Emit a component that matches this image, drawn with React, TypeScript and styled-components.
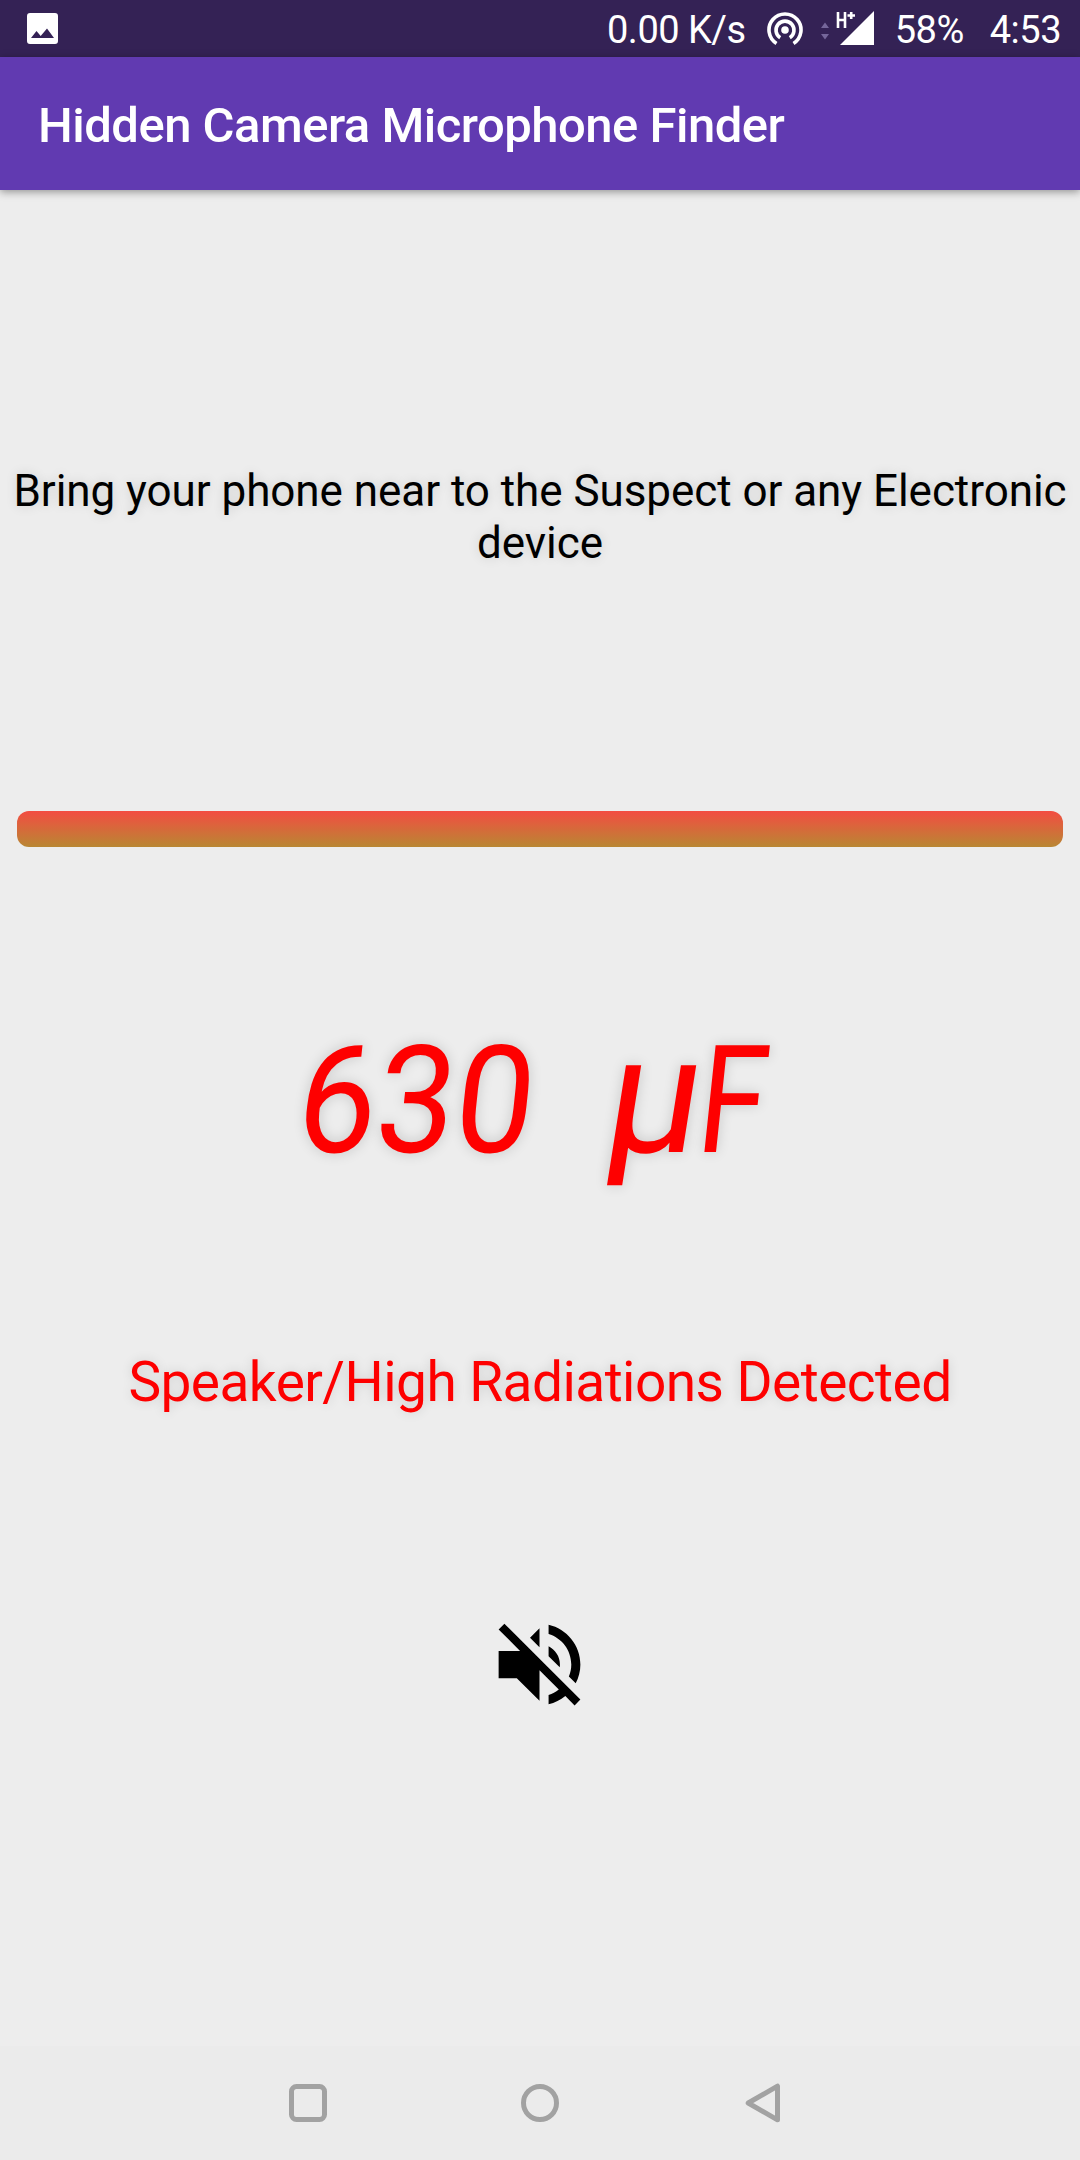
import React from 'react';
import styled, { createGlobalStyle } from 'styled-components';

const GlobalStyle = createGlobalStyle`
  * { box-sizing: border-box; }
  body { margin: 0; background: #ededed; font-family: Roboto, "Liberation Sans", sans-serif; }
`;

const Screen = styled.div`
  width: 1080px;
  height: 2160px;
  display: flex;
  flex-direction: column;
  overflow: hidden;
  background: #ededed;
`;

const StatusBar = styled.div`
  flex: none;
  height: 57px;
  padding: 0 19px 0 27px;
  display: flex;
  align-items: center;
  justify-content: space-between;
  background: #342255;
  color: #fff;
`;

const StatusGroup = styled.div`
  display: flex;
  align-items: center;
`;

const StatusText = styled.span<{ $left?: number }>`
  margin-left: ${(p) => p.$left ?? 0}px;
  font-size: 38px;
  line-height: 44px;
  letter-spacing: -0.5px;
  padding-top: 2px;
  white-space: nowrap;
`;

const Icon = styled.svg<{ $left?: number }>`
  display: block;
  flex: none;
  margin-left: ${(p) => p.$left ?? 0}px;
`;

const AppBar = styled.header`
  flex: none;
  height: 133px;
  padding: 5px 38px 0;
  display: flex;
  align-items: center;
  background: #613ab1;
  box-shadow: 0 2px 8px rgba(0, 0, 0, 0.38);
  z-index: 1;
`;

const Title = styled.h1`
  margin: 0;
  font-size: 49px;
  font-weight: 500;
  line-height: 58px;
  letter-spacing: -0.51px;
  color: #fff;
  white-space: nowrap;
`;

const Main = styled.main`
  flex: 1;
  display: flex;
  flex-direction: column;
  align-items: center;
`;

const Hint = styled.p`
  margin: 275px 0 0;
  width: 1064px;
  font-size: 44px;
  line-height: 52px;
  letter-spacing: -0.05px;
  text-align: center;
  color: #000;
  text-shadow: 0 0 12px rgba(0, 0, 0, 0.14);
`;

const Meter = styled.div`
  margin-top: 242px;
  width: 1046px;
  height: 36px;
  border-radius: 12px;
  background: linear-gradient(#f34c42, #b98733);
`;

const Reading = styled.div`
  margin-top: 161px;
  height: 176px;
  padding-right: 20px;
  display: flex;
  align-items: baseline;
  font-size: 150px;
  line-height: 176px;
  color: #fe0000;
  text-shadow: 0 0 14px rgba(0, 0, 0, 0.16);
`;

const Digits = styled.span`
  transform: skewX(-6deg) scaleX(0.935);
  transform-origin: left 80%;
  width: 307px;
`;

const Micro = styled.span`
  width: 94px;
  font-size: 164px;
  line-height: 176px;
  transform: skewX(-9deg) scaleX(1.03);
  transform-origin: left 80%;
`;

const Farad = styled.span`
  transform: skewX(-6deg) scaleX(0.82);
  transform-origin: left 80%;
  width: 74px;
`;

const Verdict = styled.p`
  margin: 165px 0 0;
  font-size: 55px;
  line-height: 66px;
  letter-spacing: -0.54px;
  color: #fe0000;
  text-shadow: 0 0 12px rgba(0, 0, 0, 0.14);
  white-space: nowrap;
`;

const MuteButton = styled.button`
  margin: 195px 2px 0 0;
  padding: 0;
  border: 0;
  background: none;
  color: #000;
`;

const NavBar = styled.nav`
  flex: none;
  height: 114px;
  padding-left: 289px;
  display: flex;
  align-items: center;
  background: #ebebeb;
`;

export default function App() {
  return (
    <Screen>
      <GlobalStyle />
      <StatusBar>
        <Icon width="31" height="31" viewBox="0 0 31 31">
          <path
            fill="#fff"
            fillRule="evenodd"
            d="M3 0H28Q31 0 31 3V28Q31 31 28 31H3Q0 31 0 28V3Q0 0 3 0ZM4 25H27L20 15.5 13.7 23 9.5 18Z"
          />
        </Icon>
        <StatusGroup>
          <StatusText>0.00 K/s</StatusText>
          <Icon $left={21} width="36" height="34" viewBox="0 0 36 34" fill="none" stroke="#fff" strokeWidth="3.6">
            <path d="M9.5 31.5A16 16 0 1 1 26.5 31.5" />
            <path d="M13.2 25.7A9 9 0 1 1 22.8 25.7" />
            <circle cx="18" cy="18" r="3.8" fill="#fff" stroke="none" />
          </Icon>
          <Icon $left={18} width="54" height="36" viewBox="0 0 54 36">
            <path d="M0 17L4 11.5 8 17ZM0 23L4 28.5 8 23Z" fill="#75669a" />
            <path d="M19 34L53 0V34Z" fill="#fff" />
            <path d="M17 1V17M24 1V17M17 9H24M26.5 4.5H34M30.2 1V8" stroke="#fff" strokeWidth="2.6" fill="none" />
          </Icon>
          <StatusText $left={20}>58%</StatusText>
          <StatusText $left={26}>4:53</StatusText>
        </StatusGroup>
      </StatusBar>
      <AppBar>
        <Title>Hidden Camera Microphone Finder</Title>
      </AppBar>
      <Main>
        <Hint>Bring your phone near to the Suspect or any Electronic device</Hint>
        <Meter />
        <Reading>
          <Digits>630</Digits>
          <Micro>µ</Micro>
          <Farad>F</Farad>
        </Reading>
        <Verdict>Speaker/High Radiations Detected</Verdict>
        <MuteButton aria-label="Mute">
          <Icon width="109" height="109" viewBox="0 0 24 24" fill="currentColor">
            <path d="M16.5 12c0-1.77-1.02-3.29-2.5-4.03v2.21l2.45 2.45c.03-.2.05-.41.05-.63zm2.5 0c0 .94-.2 1.82-.54 2.64l1.51 1.51C20.63 14.91 21 13.5 21 12c0-4.28-2.99-7.86-7-8.77v2.06c2.89.86 5 3.54 5 6.71zM4.27 3L3 4.27 7.73 9H3v6h4l5 5v-6.73l4.25 4.25c-.67.52-1.42.93-2.25 1.18v2.06c1.38-.31 2.63-.95 3.69-1.81L19.73 21 21 19.73l-9-9L4.27 3zM12 4L9.91 6.09 12 8.18V4z" />
          </Icon>
        </MuteButton>
      </Main>
      <NavBar>
        <Icon width="38" height="38" viewBox="0 0 38 38" fill="none" stroke="#a2a2a2" strokeWidth="5">
          <rect x="2.5" y="2.5" width="33" height="33" rx="5" />
        </Icon>
        <Icon $left={194} width="38" height="38" viewBox="0 0 38 38" fill="none" stroke="#a2a2a2" strokeWidth="5">
          <circle cx="19" cy="19" r="16.5" />
        </Icon>
        <Icon $left={186} width="36" height="40" viewBox="0 0 36 40" fill="none" stroke="#a2a2a2" strokeWidth="5" strokeLinejoin="round">
          <path d="M32.5 3.2V36.8L3.2 20Z" />
        </Icon>
      </NavBar>
    </Screen>
  );
}
